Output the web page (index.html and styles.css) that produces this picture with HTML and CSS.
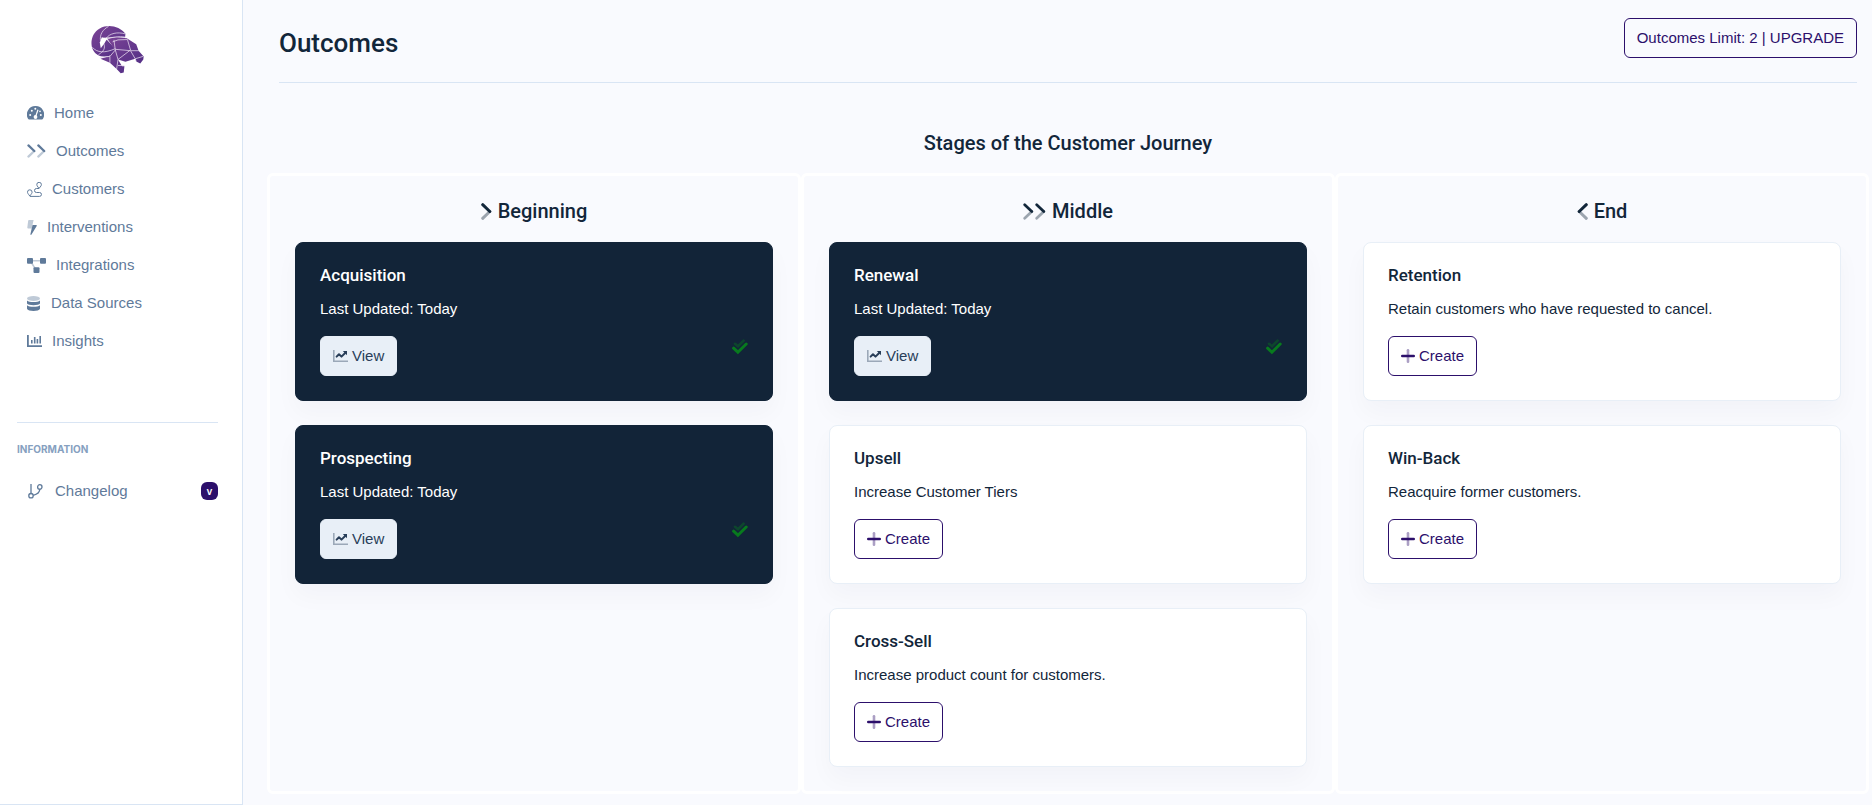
FILE: index.html
```html
<!DOCTYPE html>
<html lang="en">
<head>
<meta charset="utf-8">
<title>Outcomes</title>
<link rel="stylesheet" href="styles.css">
</head>
<body>
<svg class="sprite" aria-hidden="true">
  <symbol id="i-right" viewBox="0 0 11 17"><path d="M1.7 15.3 8.8 8.5" stroke="currentColor" stroke-opacity=".4" stroke-width="3" stroke-linecap="round" fill="none"/><path d="M1.7 1.7 8.8 8.5" stroke="currentColor" stroke-width="3" stroke-linecap="round" fill="none"/></symbol>
  <symbol id="i-left" viewBox="0 0 11 17"><path d="M9.3 15.3 2.2 8.5" stroke="currentColor" stroke-opacity=".4" stroke-width="3" stroke-linecap="round" fill="none"/><path d="M9.3 1.7 2.2 8.5" stroke="currentColor" stroke-width="3" stroke-linecap="round" fill="none"/></symbol>
  <symbol id="i-double" viewBox="0 0 23 17"><path d="M1.7 15.3 8.8 8.5M13.7 15.3 20.8 8.5" stroke="currentColor" stroke-opacity=".4" stroke-width="2.7" stroke-linecap="round" fill="none"/><path d="M1.7 1.7 8.8 8.5M13.7 1.7 20.8 8.5" stroke="currentColor" stroke-width="2.7" stroke-linecap="round" fill="none"/></symbol>
  <symbol id="i-chart" viewBox="0 0 15 12"><path d="M.8 0V11.2H15" stroke="currentColor" stroke-opacity=".4" stroke-width="1.6" fill="none"/><path d="M3.6 6.6 6 4.2 8.5 6.6 12.4 2.8" stroke="currentColor" stroke-width="2" stroke-linejoin="round" stroke-linecap="round" fill="none"/><path d="M9.8 1H14V5.3Z" fill="currentColor"/></symbol>
  <symbol id="i-plus" viewBox="0 0 14 14"><path d="M7 1.3V12.7" stroke="currentColor" stroke-opacity=".4" stroke-width="2.6" stroke-linecap="round"/><path d="M1.3 7H12.7" stroke="currentColor" stroke-width="2.6" stroke-linecap="round"/></symbol>
  <symbol id="i-check" viewBox="0 0 16 16"><path d="M3 4.8 6 7.2 11.6 1.6" stroke="currentColor" stroke-opacity=".4" stroke-width="2.6" stroke-linecap="round" fill="none"/><path d="M1.6 9.2 5.9 13.2 14.2 5" stroke="currentColor" stroke-width="3" stroke-linecap="round" fill="none"/></symbol>
</svg>

<nav class="sidebar">
  <a class="brand" href="#" aria-label="Dashboard">
    <svg viewBox="32 30 160 148" width="54" height="50">
      <defs><linearGradient id="ram" x1="0" y1="0" x2="1" y2="1"><stop offset="0" stop-color="#7d4596"/><stop offset="1" stop-color="#4e2c84"/></linearGradient></defs>
      <path fill="url(#ram)" d="M134 56C117 33 83 26 58 40 34 53 28 84 38 104 47 121 66 127 84 122 96 119 103 111 105 102L92 88 81 76 70 68 96 66 133 66Z"/>
      <path fill="url(#ram)" d="M80 70 108 66 138 69 166 87 173 106 188 123 187 132 178 144 166 138 163 130 134 139 112 132 124 152 131 152 129 171 120 173 108 160 88 142 60 130 87 122 103 104Z"/>
      <path fill="#fff" d="M64 66 80 70 72 84 61 99 58 82Z"/>
      <g fill="none" stroke="#eadff0" stroke-width="2.2">
        <path d="M133 56C110 50 88 54 76 70M84 34C66 44 58 58 60 76M36 96C50 112 72 114 104 100M54 118C70 108 75 98 70 86M134 66C115 62 92 66 80 72"/>
        <path d="M58 126 88 123 104 104M100 74 104 104 112 132 108 160M88 123V142M96 80 112 74 140 73M104 102 149 106 174 106M140 73 149 104 112 132M149 106 163 130 186 123M163 130 166 138M112 150H131"/>
      </g>
    </svg>
  </a>
  <ul class="menu">
    <li><a href="#"><svg width="17" height="14" viewBox="0 0 17 14"><path fill="currentColor" d="M8.5 0A8.5 8.5 0 0 0 1 12.7c.2.5.6.8 1.1.8h12.8c.5 0 .9-.3 1.1-.8A8.5 8.5 0 0 0 8.5 0Z"/><g fill="#fff"><circle cx="3.2" cy="9" r="1"/><circle cx="4.8" cy="4.8" r="1"/><circle cx="8.3" cy="2.7" r="1"/><circle cx="13.8" cy="9" r="1"/><circle cx="13" cy="5.4" r=".8"/></g><path d="M11 3.8 8.8 10" stroke="#fff" stroke-width="1.2"/><circle cx="8.5" cy="11" r="1.9" fill="#fff"/></svg>Home</a></li>
    <li><a href="#"><svg width="19" height="14"><use href="#i-double"/></svg>Outcomes</a></li>
    <li><a href="#"><svg width="15" height="15" viewBox="0 0 15 15" fill="none" stroke="currentColor"><path d="M12 6.4C10.4 4.3 9.8 3.5 9.8 2.6a2.3 2.3 0 0 1 4.6 0C14.4 3.5 13.8 4.3 12 6.4ZM2.8 14C1 11.7.5 11 .5 10.1a2.3 2.3 0 0 1 4.6 0C5.1 11 4.6 11.7 2.8 14ZM12 6.5H9.500a2 2 0 0 0 0 4h3a1.900 1.900 0 0 1 0 3.900H2.800"/></svg>Customers</a></li>
    <li><a href="#"><svg width="10" height="15" viewBox="0 0 10 15"><path fill="currentColor" fill-opacity=".4" d="M2 0H6.600L5.500 5H9L5 8.500H1C.5 8.500.3 8 .3 7.600L1.200.6C1.300.2 1.600 0 2 0Z"/><path fill="currentColor" d="M5.800 5H9.200C9.700 5 10 5.500 9.700 6L4.500 14.600C4.200 15.200 3.300 15 3.400 14.200L4.700 8.500Z"/></svg>Interventions</a></li>
    <li><a href="#"><svg width="19" height="15" viewBox="0 0 19 15"><path d="M5 2.800H14M4 4 8.500 11" stroke="currentColor" stroke-opacity=".4" stroke-width="1.500"/><g fill="currentColor"><rect width="6" height="5.700" rx="1"/><rect x="13" width="6" height="5.700" rx="1"/><rect x="6.500" y="9.300" width="6" height="5.700" rx="1"/></g></svg>Integrations</a></li>
    <li><a href="#"><svg width="14" height="15" viewBox="0 0 14 15"><ellipse cx="6.500" cy="2.500" rx="6.500" ry="2.500" fill="currentColor" fill-opacity=".4"/><path fill="currentColor" d="M0 4.400C2 6.400 11 6.400 13 4.400V7.600C12 9.900 1 9.900 0 7.600ZM0 9.300C2 11.300 11 11.300 13 9.300V12.800C12 15.700 1 15.700 0 12.800Z"/></svg>Data Sources</a></li>
    <li><a href="#"><svg width="15" height="12" viewBox="0 0 15 12"><path d="M.9 0V11.100H15" stroke="currentColor" stroke-width="1.800" fill="none"/><path d="M4.800 5V8.500M7.700 2V8.500M10.400 4V8.500M13.200 1V8.500" stroke="currentColor" stroke-width="1.600"/></svg>Insights</a></li>
  </ul>
  <hr class="rule">
  <h6 class="group">Information</h6>
  <ul class="menu">
    <li><a href="#"><svg width="18" height="15" viewBox="0 0 18 15" fill="none" stroke="currentColor" stroke-width="1.300"><circle cx="4" cy="11.700" r="2.200"/><circle cx="12.800" cy="2.900" r="2.200"/><path d="M4 0V9.500M12.800 5.100C12.800 8.500 10 10.500 6.200 11.300"/></svg>Changelog<span class="badge">v</span></a></li>
  </ul>
</nav>

<main class="main">
  <header class="header">
    <h1>Outcomes</h1>
    <button class="btn outline" type="button">Outcomes Limit: 2 | UPGRADE</button>
  </header>
  <h2 class="stages">Stages of the Customer Journey</h2>
  <div class="columns">
    <section class="column">
      <h2><svg width="11" height="17"><use href="#i-right"/></svg>Beginning</h2>
      <article class="card dark">
        <h3>Acquisition</h3>
        <p>Last Updated: Today</p>
        <div class="actions"><button class="btn light" type="button"><svg width="15" height="12"><use href="#i-chart"/></svg>View</button><svg class="done" width="16" height="16"><use href="#i-check"/></svg></div>
      </article>
      <article class="card dark">
        <h3>Prospecting</h3>
        <p>Last Updated: Today</p>
        <div class="actions"><button class="btn light" type="button"><svg width="15" height="12"><use href="#i-chart"/></svg>View</button><svg class="done" width="16" height="16"><use href="#i-check"/></svg></div>
      </article>
    </section>
    <section class="column">
      <h2><svg width="23" height="17"><use href="#i-double"/></svg>Middle</h2>
      <article class="card dark">
        <h3>Renewal</h3>
        <p>Last Updated: Today</p>
        <div class="actions"><button class="btn light" type="button"><svg width="15" height="12"><use href="#i-chart"/></svg>View</button><svg class="done" width="16" height="16"><use href="#i-check"/></svg></div>
      </article>
      <article class="card">
        <h3>Upsell</h3>
        <p>Increase Customer Tiers</p>
        <div class="actions"><button class="btn outline" type="button"><svg width="14" height="14"><use href="#i-plus"/></svg>Create</button></div>
      </article>
      <article class="card">
        <h3>Cross-Sell</h3>
        <p>Increase product count for customers.</p>
        <div class="actions"><button class="btn outline" type="button"><svg width="14" height="14"><use href="#i-plus"/></svg>Create</button></div>
      </article>
    </section>
    <section class="column">
      <h2><svg width="11" height="17"><use href="#i-left"/></svg>End</h2>
      <article class="card">
        <h3>Retention</h3>
        <p>Retain customers who have requested to cancel.</p>
        <div class="actions"><button class="btn outline" type="button"><svg width="14" height="14"><use href="#i-plus"/></svg>Create</button></div>
      </article>
      <article class="card">
        <h3>Win-Back</h3>
        <p>Reacquire former customers.</p>
        <div class="actions"><button class="btn outline" type="button"><svg width="14" height="14"><use href="#i-plus"/></svg>Create</button></div>
      </article>
    </section>
  </div>
</main>
</body>
</html>
```
FILE: styles.css
```css
* { box-sizing: border-box; }

body {
  margin: 0;
  display: flex;
  min-height: 100vh;
  background: #f9fafe;
  color: #12263a;
  font: 15px/22px "Liberation Sans", Arial, sans-serif;
}

h1, h2, h3, h6, p, ul { margin: 0; }

h1, h2, h3 { font-family: Roboto, "Liberation Sans", sans-serif; font-weight: 500; }

.sprite { display: none; }

.sidebar {
  flex: 0 0 243px;
  padding: 25px 24px 0 17px;
  background: #fff;
  border: solid #d9e5f4;
  border-width: 0 1px 1px 0;
}

.brand { display: flex; justify-content: center; margin-bottom: 19px; }

.menu { padding: 0; list-style: none; }

.menu a {
  display: flex;
  align-items: center;
  gap: 10px;
  height: 38px;
  padding-left: 10px;
  color: #5f7a9a;
  text-decoration: none;
}

.rule { margin: 62px 0 20px; border: 0; border-top: 1px solid #d9e5f4; }

.group {
  margin-bottom: 17px;
  color: #86a0c0;
  font: 700 10px/12px Inter, sans-serif;
  text-transform: uppercase;
}

.badge {
  margin-left: auto;
  width: 17px;
  border-radius: 6px;
  background: #2c0f6b;
  color: #fff;
  font: 600 10px/18px Inter, sans-serif;
  text-align: center;
}

.main { flex: 1; min-width: 0; padding: 0 3px 10px 24px; }

.header {
  display: flex;
  justify-content: space-between;
  align-items: flex-end;
  margin: 0 12px;
  padding: 18px 0 24px;
  border-bottom: 1px solid #d9e5f4;
}

.header h1 { font-size: 26px; line-height: 29px; }

.stages { padding: 49px 0 19px; font-size: 20px; line-height: 22px; text-align: center; }

.columns { display: grid; grid-template-columns: repeat(3, 1fr); }

.column {
  display: flex;
  flex-direction: column;
  gap: 24px;
  padding: 24px 25px;
  border: 3px solid #fff;
  border-radius: 6px;
}

.column h2 {
  display: flex;
  justify-content: center;
  align-items: center;
  gap: 6px;
  margin-bottom: -4px;
  font-size: 20px;
  line-height: 22px;
}

.card {
  padding: 24px;
  background: #fff;
  border: 1px solid #e8eff7;
  border-radius: 8px;
  box-shadow: 0 12px 24px rgba(18, 38, 63, .03);
}

.card h3 { margin-bottom: 15px; font-size: 17px; line-height: 16px; }

.card p { margin-bottom: 16px; }

.card.dark { background: #122438; border-color: #122438; color: #fff; }

.actions { display: flex; justify-content: space-between; align-items: flex-start; }

.btn {
  display: inline-flex;
  align-items: center;
  gap: 4px;
  height: 40px;
  padding: 0 12px;
  border: 1px solid #2c0f6b;
  border-radius: 6px;
  background: transparent;
  color: #2c0f6b;
  font: inherit;
}

.btn.light { background: #e8eff7; border-color: #e8eff7; color: #283e59; }

.done { margin-top: 3px; color: #087a1e; }
```
